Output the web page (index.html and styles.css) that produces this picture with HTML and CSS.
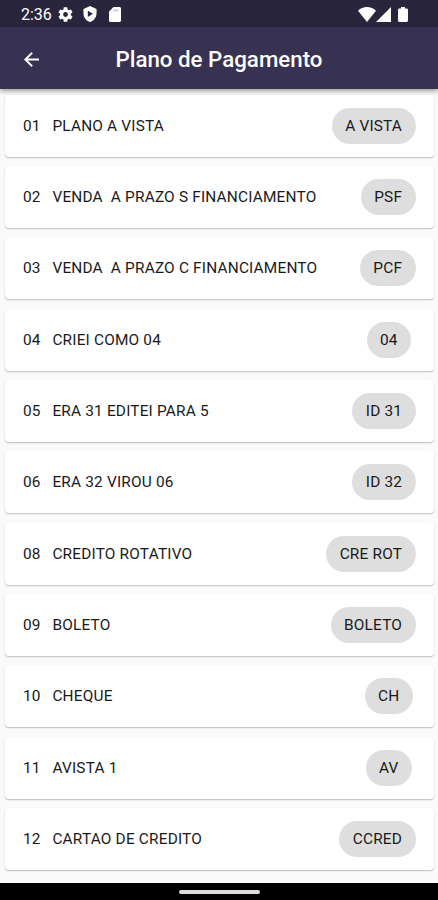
FILE: index.html
```html
<!DOCTYPE html>
<html lang="pt-BR">
<head>
    <meta charset="UTF-8">
    <meta name="viewport" content="width=device-width, initial-scale=1.0">
    <title>Plano de Pagamento</title>
    <link rel="stylesheet" href="styles.css">
</head>
<body>
    <div class="status-bar">
        <span class="clock">2:36</span>
        <svg class="icon-gear" viewBox="2 2 20 20"><path d="M19.14 12.94c.04-.3.06-.61.06-.94 0-.32-.02-.64-.07-.94l2.03-1.58a.49.49 0 0 0 .12-.61l-1.92-3.32a.49.49 0 0 0-.59-.22l-2.39.96c-.5-.38-1.03-.7-1.62-.94l-.36-2.54a.48.48 0 0 0-.48-.41h-3.84c-.24 0-.43.17-.47.41l-.36 2.54c-.59.24-1.13.57-1.62.94l-2.39-.96a.48.48 0 0 0-.59.22L2.74 8.87c-.12.21-.08.47.12.61l2.03 1.58c-.05.3-.09.63-.09.94s.02.64.07.94l-2.03 1.58a.49.49 0 0 0-.12.61l1.92 3.32c.12.22.37.29.59.22l2.39-.96c.5.38 1.03.7 1.62.94l.36 2.54c.05.24.24.41.48.41h3.84c.24 0 .44-.17.47-.41l.36-2.54c.59-.24 1.13-.56 1.62-.94l2.39.96c.22.08.47 0 .59-.22l1.92-3.32a.49.49 0 0 0-.12-.61l-2.01-1.58zM12 15.2A3.2 3.2 0 1 1 12 8.8a3.2 3.2 0 0 1 0 6.4z"/></svg>
        <svg class="icon-shield" viewBox="3 1 18 22"><path fill-rule="evenodd" d="M12 1 3 5v6c0 5.55 3.84 10.74 9 12 5.16-1.26 9-6.45 9-12V5zM9 7.5v8.5l7-4.25z"/></svg>
        <svg class="icon-sd" viewBox="4 2 16 20"><path d="M18 2h-8L4 8v12c0 1.1.9 2 2 2h12c1.1 0 2-.9 2-2V4c0-1.1-.9-2-2-2z"/><path class="sd-pins" d="M9 5h8v3H9z"/></svg>
        <div class="signals">
            <svg class="icon-wifi" viewBox="0 0 18 15"><path d="M0 3.8C5-1.2 13-1.2 18 3.8L9 15z"/></svg>
            <svg class="icon-cell" viewBox="0 0 15 15"><path d="M0 15 15 0v15z"/></svg>
            <svg class="icon-battery" viewBox="0 0 10 15"><path d="M3 0h4v1.600h1.600c.8 0 1.400.6 1.400 1.400v10.600c0 .8-.6 1.400-1.400 1.400H1.400C.6 15 0 14.400 0 13.600V3c0-.8.6-1.400 1.400-1.400H3z"/></svg>
        </div>
    </div>
    <header class="app-bar">
        <svg class="icon-back" viewBox="4 4 16 16"><path d="M20 10.900H8l5.400-5.400L12 4l-8 8 8 8 1.400-1.500L8 13.100H20z"/></svg>
        <h1 class="head-title">Plano de Pagamento</h1>
    </header>

    <ul class="plan-list">
        <li class="plan"><span class="code">01</span><span class="name">PLANO A VISTA</span><div class="chip-box"><span class="chip">A VISTA</span></div></li>
        <li class="plan"><span class="code">02</span><span class="name">VENDA  A PRAZO S FINANCIAMENTO</span><div class="chip-box"><span class="chip">PSF</span></div></li>
        <li class="plan"><span class="code">03</span><span class="name">VENDA  A PRAZO C FINANCIAMENTO</span><div class="chip-box"><span class="chip">PCF</span></div></li>
        <li class="plan"><span class="code">04</span><span class="name">CRIEI COMO 04</span><div class="chip-box"><span class="chip">04</span></div></li>
        <li class="plan"><span class="code">05</span><span class="name">ERA 31 EDITEI PARA 5</span><div class="chip-box"><span class="chip">ID 31</span></div></li>
        <li class="plan"><span class="code">06</span><span class="name">ERA 32 VIROU 06</span><div class="chip-box"><span class="chip">ID 32</span></div></li>
        <li class="plan"><span class="code">08</span><span class="name">CREDITO ROTATIVO</span><div class="chip-box"><span class="chip">CRE ROT</span></div></li>
        <li class="plan"><span class="code">09</span><span class="name">BOLETO</span><div class="chip-box"><span class="chip">BOLETO</span></div></li>
        <li class="plan"><span class="code">10</span><span class="name">CHEQUE</span><div class="chip-box"><span class="chip">CH</span></div></li>
        <li class="plan"><span class="code">11</span><span class="name">AVISTA 1</span><div class="chip-box"><span class="chip">AV</span></div></li>
        <li class="plan"><span class="code">12</span><span class="name">CARTAO DE CREDITO</span><div class="chip-box"><span class="chip">CCRED</span></div></li>
    </ul>

    <div class="nav-bar"><div class="handle"></div></div>
</body>
</html>
```
FILE: styles.css
```css
* {
    box-sizing: border-box;
}

body {
    display: flex;
    flex-direction: column;
    height: 900px;
    margin: 0;
    overflow: hidden;
    background-color: #fafafa;
    font-family: Roboto, "Liberation Sans", sans-serif;
    color: #1a1a1a;
}

svg {
    display: block;
    flex: none;
    fill: white;
}

.status-bar {
    display: flex;
    align-items: center;
    height: 27px;
    padding: 1px 30px 0 21px;
    background-color: #29253d;
    color: white;
}

.clock {
    width: 37px;
    font-size: 16px;
}

.icon-gear {
    width: 15px;
    height: 15px;
}

.icon-shield {
    width: 14px;
    height: 16px;
    margin-left: 10px;
}

.icon-sd {
    width: 12px;
    height: 15px;
    margin-left: 12px;
}

.sd-pins {
    fill: #d6d5dc;
}

.signals {
    display: flex;
    margin-left: auto;
}

.icon-wifi {
    width: 18px;
    height: 15px;
}

.icon-cell {
    width: 15px;
    height: 15px;
}

.icon-battery {
    width: 10px;
    height: 15px;
    margin-left: 7px;
}

.app-bar {
    position: relative;
    display: flex;
    align-items: center;
    height: 62px;
    padding: 2px 24px 0;
    background-color: #373152;
    box-shadow: 0 2px 5px rgba(0, 0, 0, 0.4);
}

.icon-back {
    width: 15px;
    height: 15px;
}

.head-title {
    flex: 1;
    margin: 0 15px 0 0;
    font-size: 22.3px;
    font-weight: 500;
    text-align: center;
    color: white;
}

.plan-list {
    display: flex;
    flex: 1;
    flex-direction: column;
    gap: 9.35px;
    margin: 0;
    padding: 5.5px 4.5px 0 5px;
    list-style: none;
}

.plan {
    display: flex;
    flex: none;
    align-items: center;
    height: 62px;
    padding: 0 18px;
    background-color: white;
    border-radius: 4px;
    box-shadow: 0 1px 1.5px rgba(0, 0, 0, 0.25);
    font-size: 15.4px;
    letter-spacing: 0.19px;
    white-space: pre;
}

.code {
    width: 29.4px;
}

.chip-box {
    display: flex;
    justify-content: center;
    min-width: 53.5px;
    margin-left: auto;
}

.chip {
    height: 36px;
    padding: 0 13.4px;
    background-color: #dedede;
    border-radius: 18px;
    line-height: 36px;
}

.nav-bar {
    display: flex;
    justify-content: center;
    height: 17px;
    padding-top: 7px;
    background-color: black;
}

.handle {
    width: 81px;
    height: 4px;
    background-color: #dcdcdc;
    border-radius: 2px;
}
```
